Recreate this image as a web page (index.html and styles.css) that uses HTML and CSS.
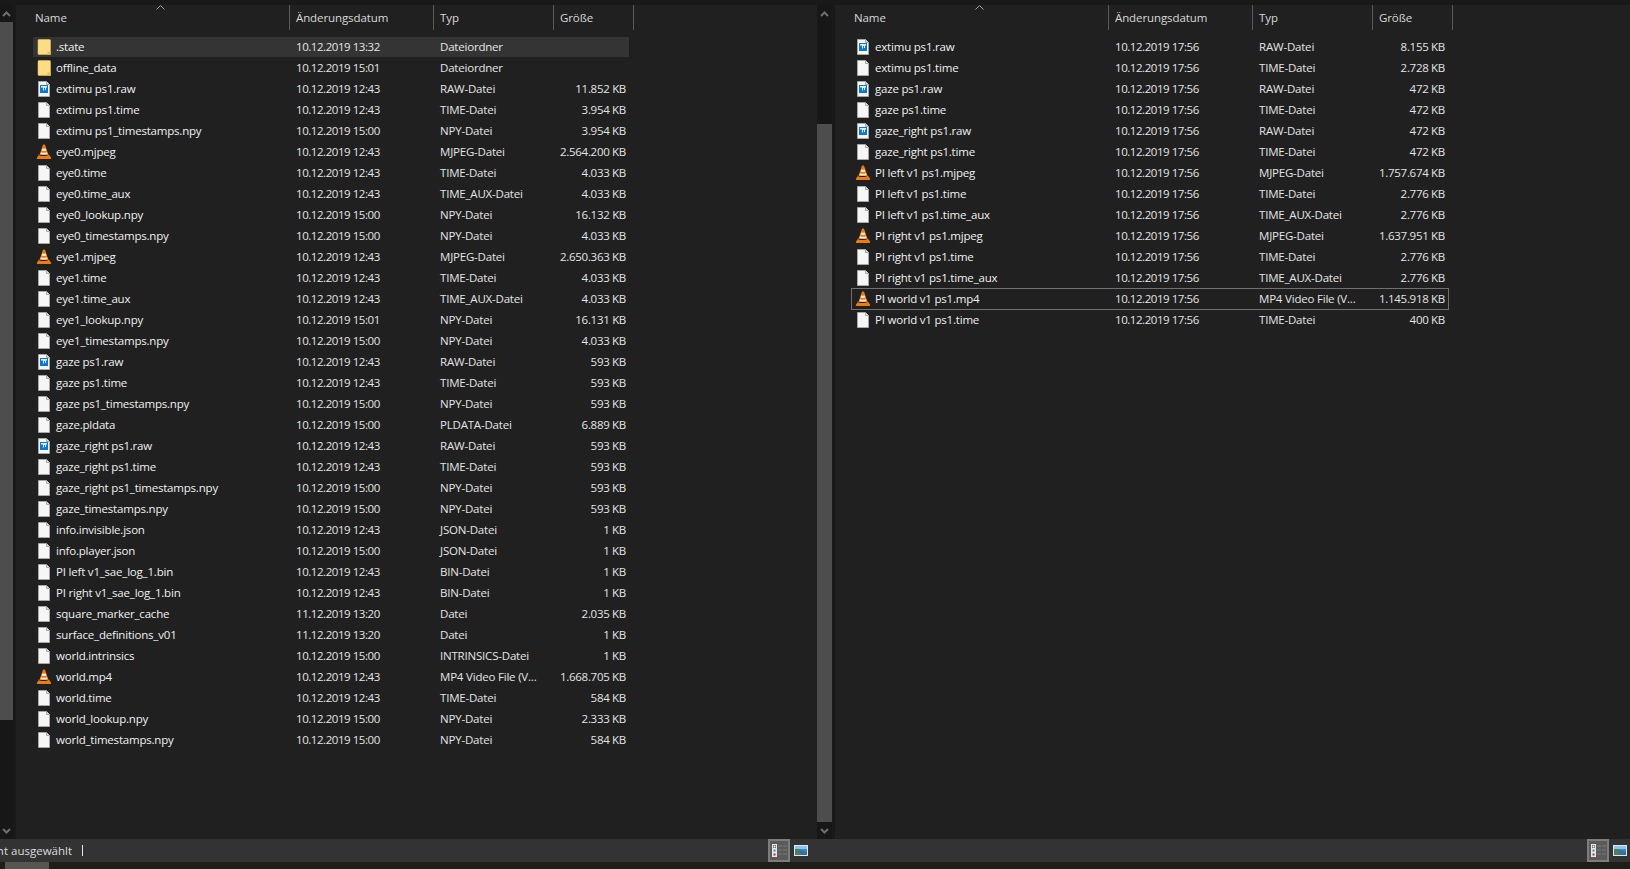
FILE: index.html
```html
<!DOCTYPE html>
<html lang="de">
<head>
  <meta charset="UTF-8">
  <title>Explorer</title>
  <link rel="stylesheet" href="styles.css">
</head>
<body>

  <!-- icons -->
  <svg class="defs" width="0" height="0">
    <symbol id="i-folder" viewBox="0 0 16 16">
      <path d="M3 .5h10.500a1 1 0 0 1 1 1v14H3a1 1 0 0 1-1-1v-13a1 1 0 0 1 1-1z" fill="#fcdc84" stroke="#e5bd5a" stroke-width=".6"/>
      <path d="M11.500 15.500v-3h3v3z" fill="#e9bf58"/>
    </symbol>
    <symbol id="i-file" viewBox="0 0 16 16">
      <path d="M2.500.5h8l3 3v12h-11z" fill="#f6f6f6" stroke="#a8a8a8"/>
      <path d="M10.500.5v3h3" fill="#ddd" stroke="#a8a8a8"/>
    </symbol>
    <symbol id="i-raw" viewBox="0 0 16 16">
      <path d="M2.500.5h8l3 3v12h-11z" fill="#f6f6f6" stroke="#a8a8a8"/>
      <path d="M10.500.5v3h3" fill="#ddd" stroke="#a8a8a8"/>
      <rect x="4" y="4" width="8" height="8" fill="#0b78d8"/>
      <path d="M5 5h6v1.500h-1v2.500h-1V7H8v2.500H7V6.500H5z" fill="#dff0ff"/>
    </symbol>
    <symbol id="i-vlc" viewBox="0 0 16 16">
      <path d="M8 .5c.8 0 1.100.4 1.300 1l3.200 9.500h-9l3.200-9.500c.2-.6.5-1 1.300-1z" fill="#f07c10"/>
      <path d="M6.300 4.400c1 .5 2.400.5 3.400 0l.7 2.200c-1.400.6-3.400.6-4.800 0zM5 8.200c1.700.7 4.300.7 6 0l.6 1.800c-2.200.8-5 .8-7.200 0z" fill="#f2f2f2"/>
      <path d="M3.200 10.500 1 13.500c-.4.600-.1 1.500.7 1.500h12.600c.8 0 1.100-.9.7-1.500l-2.200-3c-2 2-8.600 2-10.600 0z" fill="#ef7b0e"/>
    </symbol>
    <symbol id="i-details" viewBox="0 0 22 23">
      <rect x="1" y="1" width="20" height="21" fill="#5a5a5a" stroke="#7d7d7d" stroke-width="2"/>
      <rect x="4" y="5" width="5" height="13" fill="#e8e8e8"/>
      <rect x="5" y="6" width="3" height="3" fill="#4a4a4a"/>
      <rect x="5.500" y="6.500" width="2" height="2" fill="#fff"/>
      <rect x="5.500" y="10.500" width="2" height="2" fill="#2f86d0"/>
      <rect x="5.500" y="14.500" width="2" height="2" fill="#c8262a"/>
      <path d="M10 7h4M15 7h4M10 11h4M15 11h4M10 15h4M15 15h4" stroke="#7d7d7d"/>
    </symbol>
    <symbol id="i-thumbs" viewBox="0 0 14 11">
      <rect x=".5" y=".5" width="13" height="10" fill="#2f8ae0" stroke="#e6e6e6"/>
      <rect x="1" y="1" width="12" height="3" fill="#8cc4f0"/>
      <path d="M1 4.500l4-.5 8 2.500V10H1z" fill="#4c7c62"/>
      <path d="M6 6l7 1v3H7z" fill="#2f6fb0"/>
    </symbol>
  </svg>

  <div class="top-strip"></div>

  <div class="panes">

    <!-- left scrollbar -->
    <div class="scrollbar scrollbar-left">
      <svg class="arrow" width="9" height="6" viewBox="0 0 9 6"><path d="M1 5l3.500-3.500L8 5" fill="none" stroke="#6e6e6e" stroke-width="2"/></svg>
      <div class="thumb thumb-left"></div>
      <div class="track-fill"></div>
      <svg class="arrow" width="9" height="6" viewBox="0 0 9 6"><path d="M1 1l3.500 3.500L8 1" fill="none" stroke="#6e6e6e" stroke-width="2"/></svg>
    </div>

    <!-- left file list -->
    <div class="pane pane-left">
      <div class="head">
        <div class="col-head col-name">Name<svg class="sort" width="9" height="5" viewBox="0 0 9 5"><path d="M.5 4.500l4-4 4 4" fill="none" stroke="#a0a0a0"/></svg></div>
        <div class="col-head col-date">Änderungsdatum</div>
        <div class="col-head col-type">Typ</div>
        <div class="col-head col-size">Größe</div>
      </div>
      <div class="rows">
        <div class="row selected"><span class="name"><svg class="icon"><use href="#i-folder"/></svg>.state</span><span class="date">10.12.2019 13:32</span><span class="type">Dateiordner</span><span class="size"></span></div>
        <div class="row"><span class="name"><svg class="icon"><use href="#i-folder"/></svg>offline_data</span><span class="date">10.12.2019 15:01</span><span class="type">Dateiordner</span><span class="size"></span></div>
        <div class="row"><span class="name"><svg class="icon"><use href="#i-raw"/></svg>extimu ps1.raw</span><span class="date">10.12.2019 12:43</span><span class="type">RAW-Datei</span><span class="size">11.852 KB</span></div>
        <div class="row"><span class="name"><svg class="icon"><use href="#i-file"/></svg>extimu ps1.time</span><span class="date">10.12.2019 12:43</span><span class="type">TIME-Datei</span><span class="size">3.954 KB</span></div>
        <div class="row"><span class="name"><svg class="icon"><use href="#i-file"/></svg>extimu ps1_timestamps.npy</span><span class="date">10.12.2019 15:00</span><span class="type">NPY-Datei</span><span class="size">3.954 KB</span></div>
        <div class="row"><span class="name"><svg class="icon"><use href="#i-vlc"/></svg>eye0.mjpeg</span><span class="date">10.12.2019 12:43</span><span class="type">MJPEG-Datei</span><span class="size">2.564.200 KB</span></div>
        <div class="row"><span class="name"><svg class="icon"><use href="#i-file"/></svg>eye0.time</span><span class="date">10.12.2019 12:43</span><span class="type">TIME-Datei</span><span class="size">4.033 KB</span></div>
        <div class="row"><span class="name"><svg class="icon"><use href="#i-file"/></svg>eye0.time_aux</span><span class="date">10.12.2019 12:43</span><span class="type">TIME_AUX-Datei</span><span class="size">4.033 KB</span></div>
        <div class="row"><span class="name"><svg class="icon"><use href="#i-file"/></svg>eye0_lookup.npy</span><span class="date">10.12.2019 15:00</span><span class="type">NPY-Datei</span><span class="size">16.132 KB</span></div>
        <div class="row"><span class="name"><svg class="icon"><use href="#i-file"/></svg>eye0_timestamps.npy</span><span class="date">10.12.2019 15:00</span><span class="type">NPY-Datei</span><span class="size">4.033 KB</span></div>
        <div class="row"><span class="name"><svg class="icon"><use href="#i-vlc"/></svg>eye1.mjpeg</span><span class="date">10.12.2019 12:43</span><span class="type">MJPEG-Datei</span><span class="size">2.650.363 KB</span></div>
        <div class="row"><span class="name"><svg class="icon"><use href="#i-file"/></svg>eye1.time</span><span class="date">10.12.2019 12:43</span><span class="type">TIME-Datei</span><span class="size">4.033 KB</span></div>
        <div class="row"><span class="name"><svg class="icon"><use href="#i-file"/></svg>eye1.time_aux</span><span class="date">10.12.2019 12:43</span><span class="type">TIME_AUX-Datei</span><span class="size">4.033 KB</span></div>
        <div class="row"><span class="name"><svg class="icon"><use href="#i-file"/></svg>eye1_lookup.npy</span><span class="date">10.12.2019 15:01</span><span class="type">NPY-Datei</span><span class="size">16.131 KB</span></div>
        <div class="row"><span class="name"><svg class="icon"><use href="#i-file"/></svg>eye1_timestamps.npy</span><span class="date">10.12.2019 15:00</span><span class="type">NPY-Datei</span><span class="size">4.033 KB</span></div>
        <div class="row"><span class="name"><svg class="icon"><use href="#i-raw"/></svg>gaze ps1.raw</span><span class="date">10.12.2019 12:43</span><span class="type">RAW-Datei</span><span class="size">593 KB</span></div>
        <div class="row"><span class="name"><svg class="icon"><use href="#i-file"/></svg>gaze ps1.time</span><span class="date">10.12.2019 12:43</span><span class="type">TIME-Datei</span><span class="size">593 KB</span></div>
        <div class="row"><span class="name"><svg class="icon"><use href="#i-file"/></svg>gaze ps1_timestamps.npy</span><span class="date">10.12.2019 15:00</span><span class="type">NPY-Datei</span><span class="size">593 KB</span></div>
        <div class="row"><span class="name"><svg class="icon"><use href="#i-file"/></svg>gaze.pldata</span><span class="date">10.12.2019 15:00</span><span class="type">PLDATA-Datei</span><span class="size">6.889 KB</span></div>
        <div class="row"><span class="name"><svg class="icon"><use href="#i-raw"/></svg>gaze_right ps1.raw</span><span class="date">10.12.2019 12:43</span><span class="type">RAW-Datei</span><span class="size">593 KB</span></div>
        <div class="row"><span class="name"><svg class="icon"><use href="#i-file"/></svg>gaze_right ps1.time</span><span class="date">10.12.2019 12:43</span><span class="type">TIME-Datei</span><span class="size">593 KB</span></div>
        <div class="row"><span class="name"><svg class="icon"><use href="#i-file"/></svg>gaze_right ps1_timestamps.npy</span><span class="date">10.12.2019 15:00</span><span class="type">NPY-Datei</span><span class="size">593 KB</span></div>
        <div class="row"><span class="name"><svg class="icon"><use href="#i-file"/></svg>gaze_timestamps.npy</span><span class="date">10.12.2019 15:00</span><span class="type">NPY-Datei</span><span class="size">593 KB</span></div>
        <div class="row"><span class="name"><svg class="icon"><use href="#i-file"/></svg>info.invisible.json</span><span class="date">10.12.2019 12:43</span><span class="type">JSON-Datei</span><span class="size">1 KB</span></div>
        <div class="row"><span class="name"><svg class="icon"><use href="#i-file"/></svg>info.player.json</span><span class="date">10.12.2019 15:00</span><span class="type">JSON-Datei</span><span class="size">1 KB</span></div>
        <div class="row"><span class="name"><svg class="icon"><use href="#i-file"/></svg>PI left v1_sae_log_1.bin</span><span class="date">10.12.2019 12:43</span><span class="type">BIN-Datei</span><span class="size">1 KB</span></div>
        <div class="row"><span class="name"><svg class="icon"><use href="#i-file"/></svg>PI right v1_sae_log_1.bin</span><span class="date">10.12.2019 12:43</span><span class="type">BIN-Datei</span><span class="size">1 KB</span></div>
        <div class="row"><span class="name"><svg class="icon"><use href="#i-file"/></svg>square_marker_cache</span><span class="date">11.12.2019 13:20</span><span class="type">Datei</span><span class="size">2.035 KB</span></div>
        <div class="row"><span class="name"><svg class="icon"><use href="#i-file"/></svg>surface_definitions_v01</span><span class="date">11.12.2019 13:20</span><span class="type">Datei</span><span class="size">1 KB</span></div>
        <div class="row"><span class="name"><svg class="icon"><use href="#i-file"/></svg>world.intrinsics</span><span class="date">10.12.2019 15:00</span><span class="type">INTRINSICS-Datei</span><span class="size">1 KB</span></div>
        <div class="row"><span class="name"><svg class="icon"><use href="#i-vlc"/></svg>world.mp4</span><span class="date">10.12.2019 12:43</span><span class="type">MP4 Video File (V...</span><span class="size">1.668.705 KB</span></div>
        <div class="row"><span class="name"><svg class="icon"><use href="#i-file"/></svg>world.time</span><span class="date">10.12.2019 12:43</span><span class="type">TIME-Datei</span><span class="size">584 KB</span></div>
        <div class="row"><span class="name"><svg class="icon"><use href="#i-file"/></svg>world_lookup.npy</span><span class="date">10.12.2019 15:00</span><span class="type">NPY-Datei</span><span class="size">2.333 KB</span></div>
        <div class="row"><span class="name"><svg class="icon"><use href="#i-file"/></svg>world_timestamps.npy</span><span class="date">10.12.2019 15:00</span><span class="type">NPY-Datei</span><span class="size">584 KB</span></div>
      </div>
    </div>

    <!-- middle scrollbar -->
    <div class="scrollbar scrollbar-mid">
      <svg class="arrow" width="9" height="6" viewBox="0 0 9 6"><path d="M1 5l3.500-3.500L8 5" fill="none" stroke="#6e6e6e" stroke-width="2"/></svg>
      <div class="track-gap"></div>
      <div class="thumb thumb-mid"></div>
      <svg class="arrow" width="9" height="6" viewBox="0 0 9 6"><path d="M1 1l3.500 3.500L8 1" fill="none" stroke="#6e6e6e" stroke-width="2"/></svg>
    </div>

    <!-- right file list -->
    <div class="pane pane-right">
      <div class="head">
        <div class="col-head col-name">Name<svg class="sort" width="9" height="5" viewBox="0 0 9 5"><path d="M.5 4.500l4-4 4 4" fill="none" stroke="#a0a0a0"/></svg></div>
        <div class="col-head col-date">Änderungsdatum</div>
        <div class="col-head col-type">Typ</div>
        <div class="col-head col-size">Größe</div>
      </div>
      <div class="rows">
        <div class="row"><span class="name"><svg class="icon"><use href="#i-raw"/></svg>extimu ps1.raw</span><span class="date">10.12.2019 17:56</span><span class="type">RAW-Datei</span><span class="size">8.155 KB</span></div>
        <div class="row"><span class="name"><svg class="icon"><use href="#i-file"/></svg>extimu ps1.time</span><span class="date">10.12.2019 17:56</span><span class="type">TIME-Datei</span><span class="size">2.728 KB</span></div>
        <div class="row"><span class="name"><svg class="icon"><use href="#i-raw"/></svg>gaze ps1.raw</span><span class="date">10.12.2019 17:56</span><span class="type">RAW-Datei</span><span class="size">472 KB</span></div>
        <div class="row"><span class="name"><svg class="icon"><use href="#i-file"/></svg>gaze ps1.time</span><span class="date">10.12.2019 17:56</span><span class="type">TIME-Datei</span><span class="size">472 KB</span></div>
        <div class="row"><span class="name"><svg class="icon"><use href="#i-raw"/></svg>gaze_right ps1.raw</span><span class="date">10.12.2019 17:56</span><span class="type">RAW-Datei</span><span class="size">472 KB</span></div>
        <div class="row"><span class="name"><svg class="icon"><use href="#i-file"/></svg>gaze_right ps1.time</span><span class="date">10.12.2019 17:56</span><span class="type">TIME-Datei</span><span class="size">472 KB</span></div>
        <div class="row"><span class="name"><svg class="icon"><use href="#i-vlc"/></svg>PI left v1 ps1.mjpeg</span><span class="date">10.12.2019 17:56</span><span class="type">MJPEG-Datei</span><span class="size">1.757.674 KB</span></div>
        <div class="row"><span class="name"><svg class="icon"><use href="#i-file"/></svg>PI left v1 ps1.time</span><span class="date">10.12.2019 17:56</span><span class="type">TIME-Datei</span><span class="size">2.776 KB</span></div>
        <div class="row"><span class="name"><svg class="icon"><use href="#i-file"/></svg>PI left v1 ps1.time_aux</span><span class="date">10.12.2019 17:56</span><span class="type">TIME_AUX-Datei</span><span class="size">2.776 KB</span></div>
        <div class="row"><span class="name"><svg class="icon"><use href="#i-vlc"/></svg>PI right v1 ps1.mjpeg</span><span class="date">10.12.2019 17:56</span><span class="type">MJPEG-Datei</span><span class="size">1.637.951 KB</span></div>
        <div class="row"><span class="name"><svg class="icon"><use href="#i-file"/></svg>PI right v1 ps1.time</span><span class="date">10.12.2019 17:56</span><span class="type">TIME-Datei</span><span class="size">2.776 KB</span></div>
        <div class="row"><span class="name"><svg class="icon"><use href="#i-file"/></svg>PI right v1 ps1.time_aux</span><span class="date">10.12.2019 17:56</span><span class="type">TIME_AUX-Datei</span><span class="size">2.776 KB</span></div>
        <div class="row focused"><span class="name"><svg class="icon"><use href="#i-vlc"/></svg>PI world v1 ps1.mp4</span><span class="date">10.12.2019 17:56</span><span class="type">MP4 Video File (V...</span><span class="size">1.145.918 KB</span></div>
        <div class="row"><span class="name"><svg class="icon"><use href="#i-file"/></svg>PI world v1 ps1.time</span><span class="date">10.12.2019 17:56</span><span class="type">TIME-Datei</span><span class="size">400 KB</span></div>
      </div>
    </div>

  </div>

  <!-- status bar -->
  <div class="status">
    <div class="status-left">
      <div class="status-text"><span>1 Element ausgewählt</span></div>
      <div class="status-sep"></div>
      <svg class="view-details"><use href="#i-details"/></svg>
      <svg class="view-thumbs"><use href="#i-thumbs"/></svg>
    </div>
    <div class="status-right">
      <svg class="view-details"><use href="#i-details"/></svg>
      <svg class="view-thumbs"><use href="#i-thumbs"/></svg>
    </div>
  </div>

  <!-- desktop behind the window -->
  <div class="desktop">
    <div class="desktop-tile"></div>
  </div>

</body>
</html>
```

FILE: styles.css
```css
* {
  margin: 0;
  padding: 0;
  box-sizing: border-box;
}

body {
  width: 1630px;
  height: 869px;
  overflow: hidden;
  background-color: #191919;
  font-family: "Open Sans", "Noto Sans", sans-serif;
  font-size: 11.5px;
  display: flex;
  flex-direction: column;
}

.defs {
  display: block;
  height: 0;
}

.top-strip {
  height: 5px;
  background-color: #191919;
}

.panes {
  display: flex;
  height: 834px;
}

/* Scrollbars */
.scrollbar {
  flex-shrink: 0;
  display: flex;
  flex-direction: column;
  align-items: center;
  background-color: #171717;
}

.scrollbar-left {
  width: 13px;
  margin-right: 3px;
}

.scrollbar-mid {
  width: 15px;
  margin-right: 3px;
}

.arrow {
  flex-shrink: 0;
  margin: 6px 0 5px;
}

.thumb {
  width: 100%;
  background-color: #4d4d4d;
}

.thumb-left {
  height: 698px;
}

.thumb-mid {
  height: 698px;
}

.track-fill {
  flex-grow: 1;
}

.track-gap {
  height: 102px;
}

/* File list */
.pane {
  background-color: #202020;
  color: #f0f0f0;
}

.pane-left {
  width: 801px;
  padding-left: 17px;
}

.pane-right {
  flex-grow: 1;
  padding-left: 17px;
}

.head {
  display: flex;
  height: 25px;
  color: #d8d8d8;
  letter-spacing: -0.1px;
}

.col-head {
  position: relative;
  display: flex;
  align-items: center;
  border-right: 1px solid #5a5a5a;
  padding-left: 6px;
}

.col-name {
  width: 257px;
  padding-left: 2px;
}

.col-date {
  width: 144px;
}

.col-type {
  width: 120px;
}

.col-size {
  width: 80px;
}

.sort {
  position: absolute;
  left: 123px;
  top: 0;
}

.rows {
  padding-top: 7px;
}

.row {
  display: flex;
  align-items: center;
  width: 596px;
  height: 20px;
  margin-bottom: 1px;
  padding-bottom: 1px;
  white-space: nowrap;
}

.row.selected {
  background-color: #343434;
}

.row.focused {
  outline: 1px solid #707070;
}

.name {
  width: 256px;
  padding-left: 3px;
  display: flex;
  align-items: center;
  letter-spacing: -0.2px;
}

.icon {
  width: 16px;
  height: 16px;
  margin-right: 4px;
  flex-shrink: 0;
}

.date {
  width: 144px;
  padding-left: 7px;
  color: #e4e4e4;
  letter-spacing: -0.45px;
}

.type {
  width: 120px;
  padding-left: 7px;
  color: #e4e4e4;
  letter-spacing: -0.2px;
}

.size {
  width: 76px;
  padding-right: 3px;
  text-align: right;
  color: #e4e4e4;
  letter-spacing: -0.3px;
}

/* Status bar */
.status {
  display: flex;
  height: 23px;
  background-color: #333;
  color: #dcdcdc;
}

.status-left {
  width: 835px;
  display: flex;
  align-items: center;
}

.status-right {
  flex-grow: 1;
  display: flex;
  align-items: center;
  justify-content: flex-end;
  padding-right: 3px;
}

/* the window runs off the left edge of the screen, so the text is cut there */
.status-text {
  width: 72px;
  display: flex;
  justify-content: flex-end;
  overflow: hidden;
  white-space: nowrap;
}

.status-text span {
  flex-shrink: 0;
}

.status-sep {
  width: 1px;
  height: 11px;
  margin-left: 10px;
  background-color: #e6e6e6;
}

.view-details {
  width: 22px;
  height: 23px;
  flex-shrink: 0;
}

.status-left .view-details {
  margin-left: 685px;
}

.view-thumbs {
  width: 14px;
  height: 11px;
  margin-left: 4px;
  flex-shrink: 0;
}

.desktop {
  height: 7px;
  display: flex;
  padding-left: 5px;
  background-color: #1c1e17;
}

.desktop-tile {
  width: 44px;
  background-color: #55564f;
  margin-right: 3px;
}
```
